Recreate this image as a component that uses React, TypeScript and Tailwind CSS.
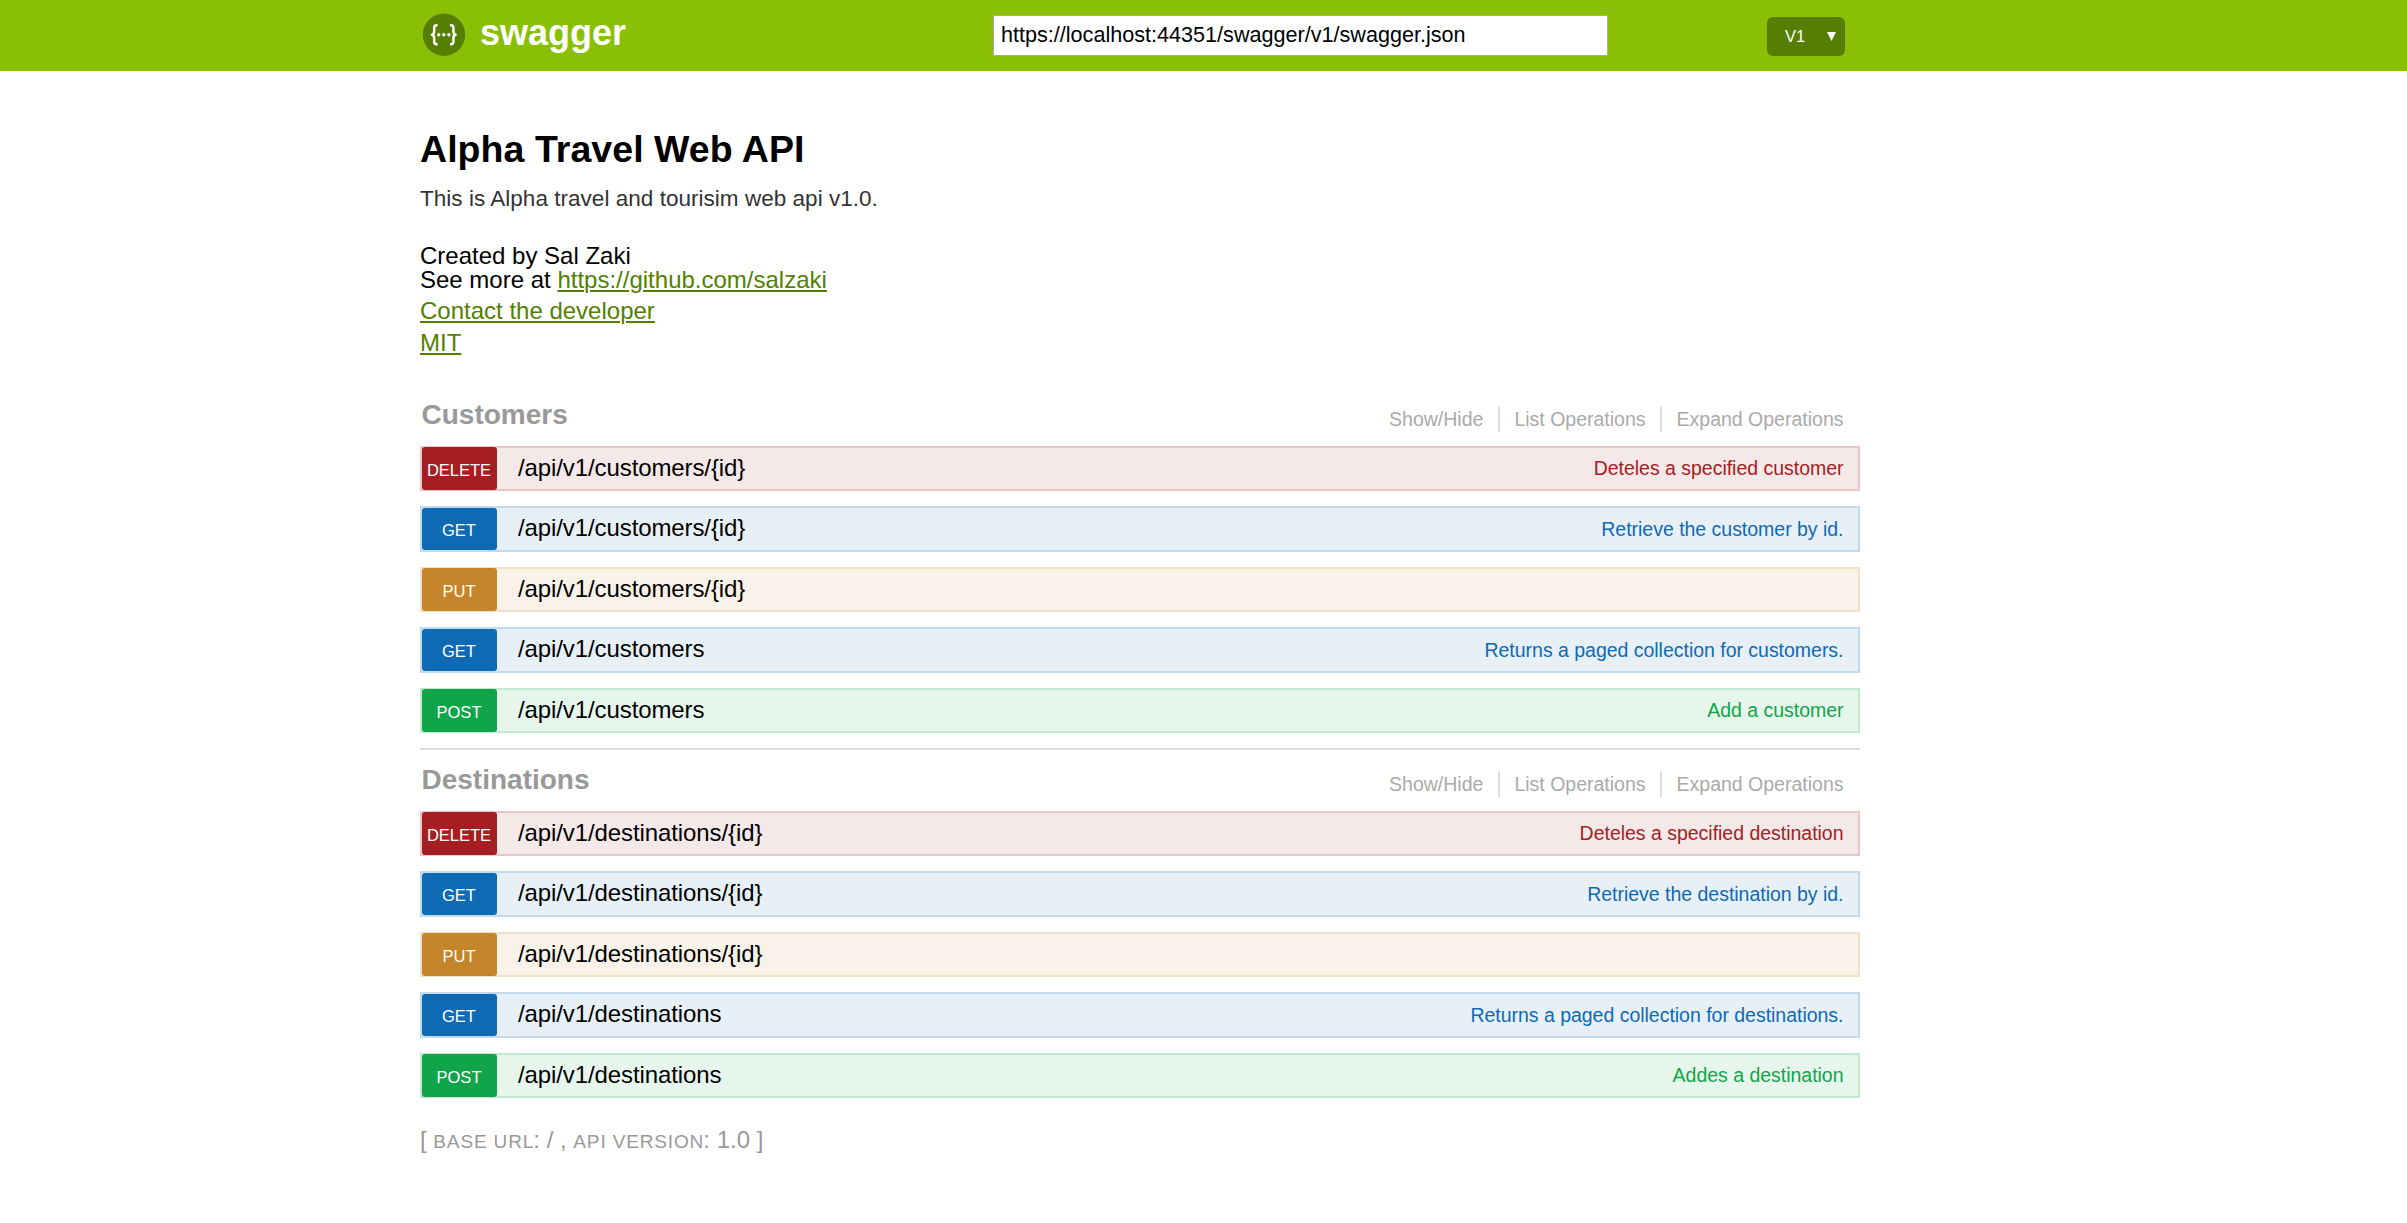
type Method = 'delete' | 'get' | 'put' | 'post';

interface Operation {
  method: Method;
  path: string;
  summary: string;
}

interface Resource {
  name: string;
  operations: Operation[];
}

const resources: Resource[] = [
  {
    name: 'Customers',
    operations: [
      { method: 'delete', path: '/api/v1/customers/{id}', summary: 'Deteles a specified customer' },
      { method: 'get', path: '/api/v1/customers/{id}', summary: 'Retrieve the customer by id.' },
      { method: 'put', path: '/api/v1/customers/{id}', summary: '' },
      { method: 'get', path: '/api/v1/customers', summary: 'Returns a paged collection for customers.' },
      { method: 'post', path: '/api/v1/customers', summary: 'Add a customer' },
    ],
  },
  {
    name: 'Destinations',
    operations: [
      { method: 'delete', path: '/api/v1/destinations/{id}', summary: 'Deteles a specified destination' },
      { method: 'get', path: '/api/v1/destinations/{id}', summary: 'Retrieve the destination by id.' },
      { method: 'put', path: '/api/v1/destinations/{id}', summary: '' },
      { method: 'get', path: '/api/v1/destinations', summary: 'Returns a paged collection for destinations.' },
      { method: 'post', path: '/api/v1/destinations', summary: 'Addes a destination' },
    ],
  },
];

const styles: Record<Method, { row: string; badge: string; text: string }> = {
  delete: {
    row: 'h-[45px] bg-[#f5e8e8] border-[#e8c6c7]',
    badge: '-my-px bg-[#a41e22] leading-[47px]',
    text: 'text-[#a41e22] leading-[40px]',
  },
  get: {
    row: 'h-[46px] bg-[#e7f0f7] border-[#c3d9ec]',
    badge: 'bg-[#0f6ab4] leading-[45px]',
    text: 'text-[#0f6ab4] leading-[42px]',
  },
  put: {
    row: 'h-[45px] bg-[#f9f2e9] border-[#f0e0ca]',
    badge: '-my-px bg-[#c5862b] leading-[47px]',
    text: 'text-[#c5862b] leading-[40px]',
  },
  post: {
    row: 'h-[45px] bg-[#e7f6ec] border-[#c3e8d1]',
    badge: '-my-px bg-[#10a54a] leading-[47px]',
    text: 'text-[#10a54a] leading-[40px]',
  },
};

function Logo() {
  return (
    <svg className="h-[44px] w-[44px]" viewBox="0 0 44 44" fill="none">
      <circle cx="22" cy="21.700" r="21.200" fill="#547f00" />
      <g stroke="#fff" strokeWidth="2.500" strokeLinecap="round" strokeLinejoin="round">
        <path d="M14.600 12.200C12.600 12.200 12.200 12.900 12.200 14.600V18C12.200 20.200 11.600 21.400 10 21.700C11.600 22 12.200 23.200 12.200 25.400V28.800C12.200 30.500 12.600 31.200 14.600 31.200" />
        <path d="M29 12.200C31 12.200 31.400 12.900 31.400 14.600V18C31.400 20.200 32 21.400 33.600 21.700C32 22 31.400 23.200 31.400 25.400V28.800C31.400 30.500 31 31.200 29 31.200" />
      </g>
      <circle cx="16.700" cy="21.700" r="1.700" fill="#fff" />
      <circle cx="21.800" cy="21.700" r="1.700" fill="#fff" />
      <circle cx="26.900" cy="21.700" r="1.700" fill="#fff" />
    </svg>
  );
}

function Header() {
  return (
    <header className="h-[71px] bg-[#89bf04]">
      <div className="ml-[420px] flex w-[1440px] items-start">
        <a className="ml-[2px] flex">
          <span className="mt-[13px]">
            <Logo />
          </span>
          <span className="ml-[14px] text-[36px] font-bold leading-[65px] text-white">swagger</span>
        </a>
        <input
          className="ml-auto mt-[15px] h-[41px] w-[615px] border border-[#aaa] bg-white pb-[2px] pl-[7px] text-[21.6px] text-black outline-none"
          defaultValue="https://localhost:44351/swagger/v1/swagger.json"
        />
        <button className="ml-[159px] mr-[15px] mt-[17px] flex h-[39px] w-[78px] items-center rounded-[6px] bg-[#547f00] pl-[18px] text-[16.5px] text-white">
          <span>V1</span>
          <svg className="ml-[22px] h-[9px] w-[9px]" viewBox="0 0 9 9">
            <path d="M0 0h9L4.500 9z" fill="#fff" />
          </svg>
        </button>
      </div>
    </header>
  );
}

function OperationRow({ method, path, summary }: Operation) {
  const s = styles[method];
  return (
    <li className={`flex border-2 ${s.row}`}>
      <span
        className={`w-[75px] shrink-0 rounded-[3px] pr-px text-center text-[16.5px] uppercase text-white ${s.badge}`}
      >
        {method}
      </span>
      <span className="ml-[21px] text-[24px] leading-[40px] tracking-[-0.1px] text-black">{path}</span>
      <span className={`ml-auto mr-[14.5px] text-[19.5px] tracking-[-0.02px] ${s.text}`}>{summary}</span>
    </li>
  );
}

function ResourceSection({ name, operations }: Resource) {
  return (
    <section className="h-[363px]">
      <div className="flex h-[61px] justify-between pl-[1.5px]">
        <h2 className="text-[28px] font-bold leading-[59px] text-[#999]">{name}</h2>
        <ul className="mr-[16.5px] mt-[22px] flex h-[25px] text-[19.5px] leading-[25px] text-[#aaa]">
          <li className="border-r-2 border-[#ddd] pr-[15px]">Show/Hide</li>
          <li className="border-r-2 border-[#ddd] pl-[14px] pr-[14.5px]">List Operations</li>
          <li className="pl-[14.5px]">Expand Operations</li>
        </ul>
      </div>
      <ul className="flex flex-col gap-[15px]">
        {operations.map((op) => (
          <OperationRow key={op.method + op.path} {...op} />
        ))}
      </ul>
    </section>
  );
}

function FooterLabel({ children }: { children: string }) {
  return (
    <span className="mr-[-0.8px] text-[19px] uppercase tracking-[0.85px]">{children}</span>
  );
}

export default function App() {
  return (
    <div className="min-h-[1223px] bg-white font-['Liberation_Sans',Arial,sans-serif] text-black">
      <Header />
      <main className="ml-[420px] w-[1440px]">
        <div className="h-[314px] pt-[53px] text-[24px]">
          <h1 className="text-[37.5px] font-bold leading-[50px] tracking-[0.05px]">Alpha Travel Web API</h1>
          <p className="text-[22.5px] leading-[49px] tracking-[0.03px] text-[#333]">
            This is Alpha travel and tourisim web api v1.0.
          </p>
          <div className="mt-[21px] leading-[24px]">Created by Sal Zaki</div>
          <div className="leading-[24px]">
            See more at{' '}
            <a className="text-[#547f00] underline decoration-2 underline-offset-2">https://github.com/salzaki</a>
          </div>
          <div className="mt-[3px] leading-[32px] text-[#547f00]">
            <a className="underline decoration-2 underline-offset-2">Contact the developer</a>
          </div>
          <div className="leading-[32px] text-[#547f00]">
            <a className="underline decoration-2 underline-offset-2">MIT</a>
          </div>
        </div>
        {resources.map((r, i) => (
          <div key={r.name} className={i === 0 ? 'border-b-2 border-[#ddd]' : ''}>
            <ResourceSection {...r} />
          </div>
        ))}
        <footer className="mt-[12px] text-[24px] leading-[30px] text-[#999]">
          [ <FooterLabel>base url</FooterLabel>: / , <FooterLabel>api version</FooterLabel>: 1.0 ]
        </footer>
      </main>
    </div>
  );
}
